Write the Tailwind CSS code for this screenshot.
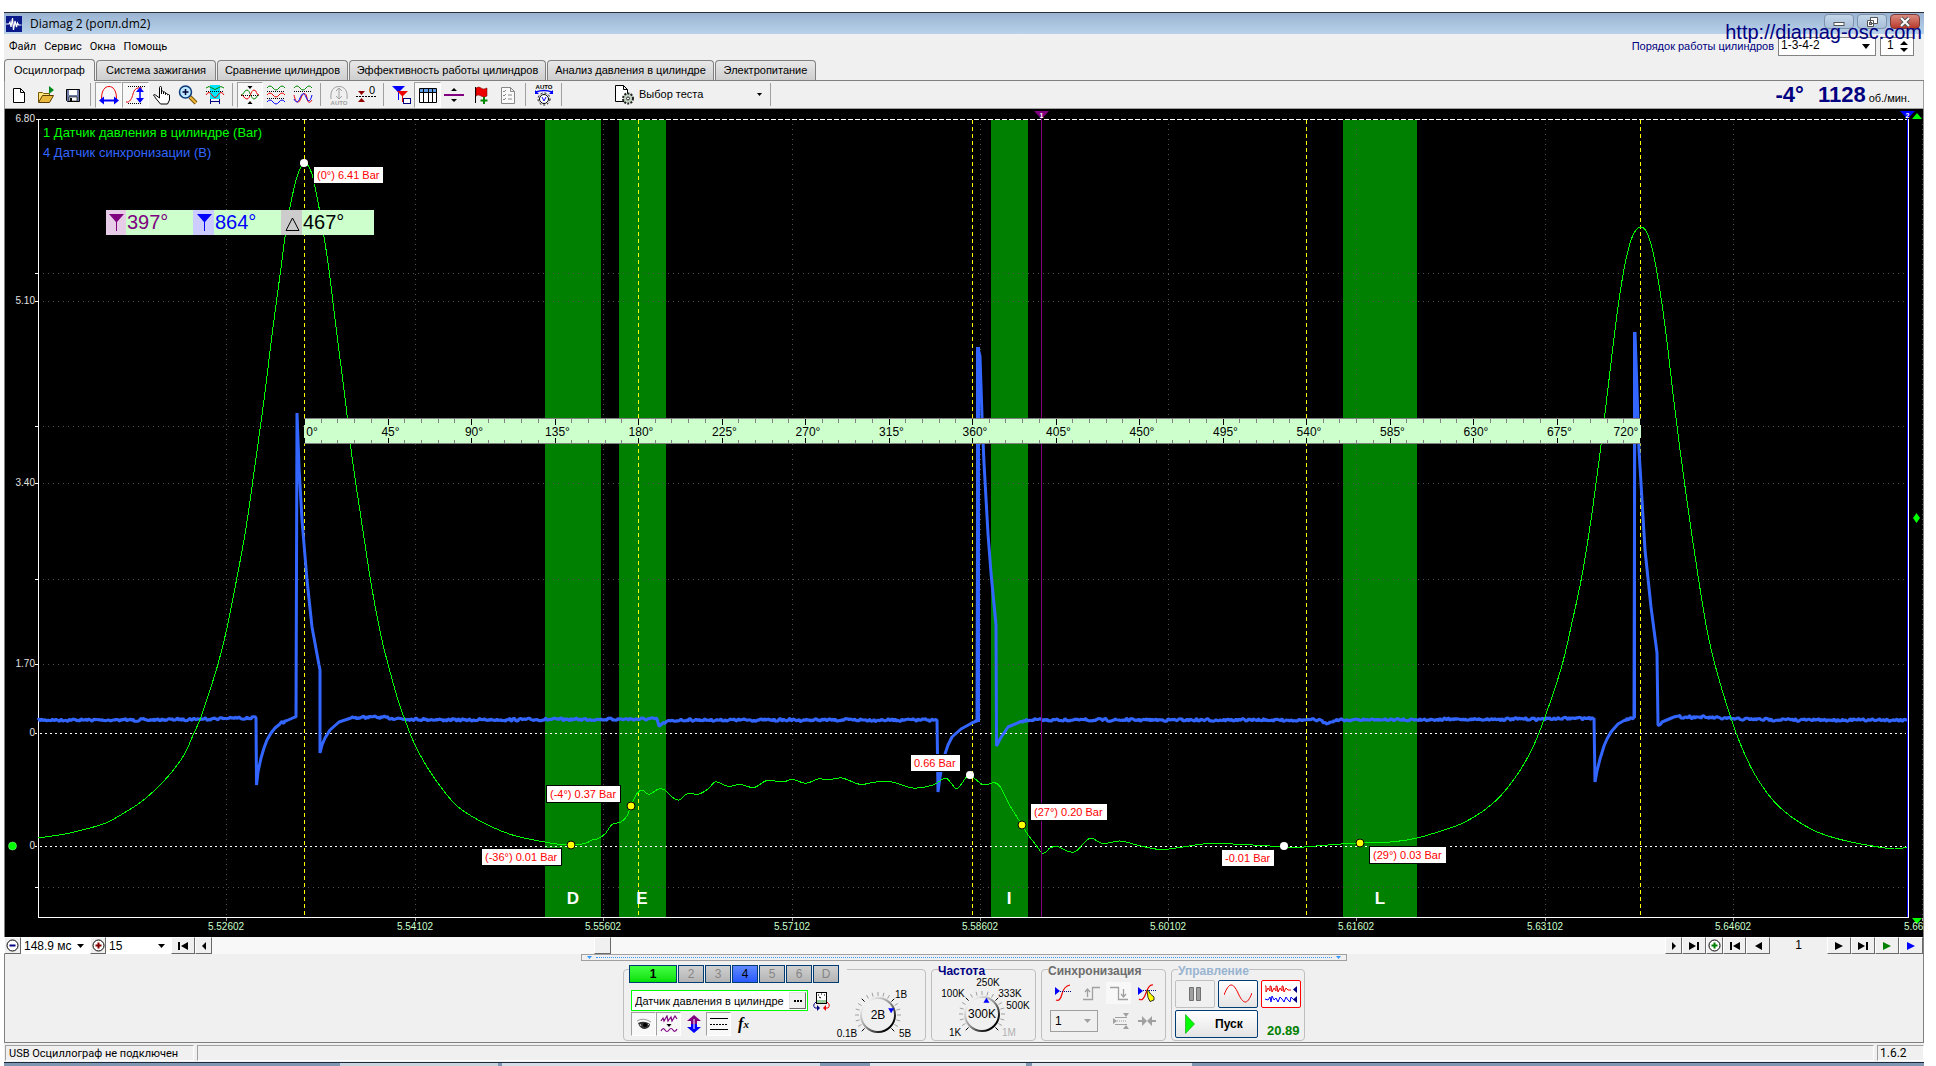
<!DOCTYPE html>
<html lang="ru">
<head>
<meta charset="utf-8">
<title>Diamag 2 (ропл.dm2)</title>
<script src="https://cdn.jsdelivr.net/npm/@tailwindcss/browser@4"></script>
</head>
<body class="h-screen overflow-hidden bg-white font-['Liberation_Sans',sans-serif] text-[11px] leading-none text-black">
<div class="flex h-full flex-col pt-3">
<div class="mr-3 ml-1 flex min-h-0 flex-1 flex-col bg-[#f0f0f0]">

  <!-- Title bar -->
  <header class="relative flex h-[22px] shrink-0 items-center border-t border-[#2b3038] bg-linear-to-b from-[#9ab4d2] to-[#b9d1ea] pt-px pl-[2px]">
    <svg class="h-4 w-4" viewBox="0 0 16 16"><rect width="16" height="16" fill="#0a1a8a"/><path d="M0 8h3l1-2 1 5 1.500-9 1 12 1.500-9 1.500 6 1-4 1 2h3" fill="none" stroke="#fff" stroke-width="1.200"/></svg>
    <span class="ml-2 font-['Open_Sans',sans-serif] text-[12px]">Diamag 2 (ропл.dm2)</span>
    <div class="ml-auto flex h-full items-start gap-[3px] pr-1">
      <button class="flex h-[15px] w-[30px] items-center justify-center rounded-sm border border-[#7f93ab] bg-linear-to-b from-[#c3d5e8] to-[#a9c0d9]" aria-label="Свернуть"><svg class="h-3 w-3" viewBox="0 0 12 12"><rect x="1" y="6.500" width="10" height="3" fill="#fff" stroke="#555"/></svg></button>
      <button class="flex h-[15px] w-[30px] items-center justify-center rounded-sm border border-[#7f93ab] bg-linear-to-b from-[#c3d5e8] to-[#a9c0d9]" aria-label="Развернуть"><svg class="h-3 w-3" viewBox="0 0 12 12"><path d="M4.500 1.500h7v6h-7zM1.500 4.500h6v6h-6z" fill="#fff" stroke="#555"/><rect x="3.500" y="6.500" width="2" height="2" fill="#aaa" stroke="#555"/></svg></button>
      <button class="flex h-[15px] w-[30px] items-center justify-center rounded-sm border border-[#7a3a35] bg-linear-to-b from-[#d98a80] to-[#b8382a]" aria-label="Закрыть"><svg class="h-3 w-3" viewBox="0 0 12 12"><path d="M2 2l8 8M10 2l-8 8" stroke="#555" stroke-width="4"/><path d="M2 2l8 8M10 2l-8 8" stroke="#fff" stroke-width="2"/></svg></button>
    </div>
    <a href="#" class="absolute top-[6px] right-[2px] z-10 text-[20px] leading-[26px] text-[#000080]">http://diamag-osc.com</a>
  </header>

  <!-- Menu and cylinder order -->
  <div class="flex h-6 shrink-0 items-start">
    <nav class="flex gap-2 pt-[7px] pl-[5px] font-['Roboto',sans-serif]">
      <a href="#">Файл</a><a href="#">Сервис</a><a href="#">Окна</a><a href="#">Помощь</a>
    </nav>
    <div class="ml-auto flex items-center pt-[3px] pr-[10px]">
      <label for="order" class="mr-1 text-[#000080]">Порядок работы цилиндров</label>
      <div class="relative mr-1">
        <select id="order" class="block h-[19px] w-[98px] appearance-none border border-[#828282] bg-white pb-1 pl-[2px] text-[12px]"><option>1-3-4-2</option></select>
        <svg class="pointer-events-none absolute top-[7px] right-[6px] h-[5px] w-2" viewBox="0 0 8 5"><path d="M0 0h8L4 5z"/></svg>
      </div>
      <div class="relative">
        <input aria-label="Цилиндр" value="1" class="block h-[19px] w-[34px] border border-[#828282] bg-white pb-1 pl-[6px] text-[12px]">
        <svg class="absolute top-1 right-[6px] h-[11px] w-2" viewBox="0 0 8 11"><path d="M0 4h8L4 0zM0 7h8L4 11z"/></svg>
      </div>
    </div>
  </div>

  <!-- Tabs -->
  <div class="flex h-[23px] shrink-0 items-end gap-px border-b border-[#808080]" role="tablist">
    <button role="tab" class="-mb-px h-[22px] w-[91px] rounded-t border border-b-0 border-[#808080] bg-[#f0f0f0]">Осциллограф</button>
    <button role="tab" class="h-[20px] w-[120px] rounded-t border border-b-0 border-[#808080] bg-linear-to-b from-[#e8e8e8] to-[#cecece]">Система зажигания</button>
    <button role="tab" class="h-[20px] w-[131px] rounded-t border border-b-0 border-[#808080] bg-linear-to-b from-[#e8e8e8] to-[#cecece]">Сравнение цилиндров</button>
    <button role="tab" class="h-[20px] w-[197px] rounded-t border border-b-0 border-[#808080] bg-linear-to-b from-[#e8e8e8] to-[#cecece]">Эффективность работы цилиндров</button>
    <button role="tab" class="h-[20px] w-[167px] rounded-t border border-b-0 border-[#808080] bg-linear-to-b from-[#e8e8e8] to-[#cecece]">Анализ давления в цилиндре</button>
    <button role="tab" class="h-[20px] w-[101px] rounded-t border border-b-0 border-[#808080] bg-linear-to-b from-[#e8e8e8] to-[#cecece]">Электропитание</button>
  </div>

  <!-- Toolbar -->
  <div class="flex h-7 shrink-0 items-center border-x border-b border-[#a0a0a0]">
    <button class="flex h-6 w-[27px] items-center justify-center" aria-label="Новый"><svg class="h-5 w-5" viewBox="0 0 20 20"><path d="M4.500 3.500h7l4 4v10h-11zM11.500 3.500v4h4" fill="#fff" stroke="#000"/></svg></button>
    <button class="flex h-6 w-[27px] items-center justify-center" aria-label="Открыть"><svg class="h-5 w-5" viewBox="0 0 20 20"><path d="M2.500 17V7.500h4l1 1h6V11" fill="#ffe680" stroke="#7a5a00"/><path d="M2.500 17.500l4-7h11l-4 7z" fill="#e8b93c" stroke="#5a3c00"/><path d="M13 1v8l5-4z" fill="#008a1c"/></svg></button>
    <button class="flex h-6 w-[27px] items-center justify-center" aria-label="Сохранить"><svg class="h-5 w-5" viewBox="0 0 20 20"><path d="M3.500 4.500h13v12h-12l-1-1z" fill="#707ca8" stroke="#000"/><path d="M6 5h8v5H6z" fill="#fff"/><path d="M6 12h8v4H6z" fill="#fff" stroke="#000" stroke-width=".6"/><path d="M7 13h2v3H7z"/></svg></button>
    <i class="mx-1 h-[23px] w-px bg-[#a0a0a0]"></i>
    <button class="flex h-[26px] w-[27px] items-center justify-center border border-r-white border-b-white border-l-[#a0a0a0] border-t-[#a0a0a0] bg-[#f8f8f8]" aria-label="Автоширина"><svg class="h-5 w-5" viewBox="0 0 20 20"><path d="M2.500 14C2.500 5 6 1.500 10 1.500S17.500 5 17.500 14" fill="none" stroke="#e00"/><path d="M3 15.500h14" stroke="#00f" stroke-width="2"/><path d="M0 15.500l5-4v8zM20 15.500l-5-4v8z" fill="#00f"/></svg></button>
    <button class="flex h-[26px] w-[27px] items-center justify-center border border-r-white border-b-white border-l-[#a0a0a0] border-t-[#a0a0a0] bg-[#f8f8f8]" aria-label="Автовысота"><svg class="h-5 w-5" viewBox="0 0 20 20"><path d="M2 1.500h17M2 18.500h13" stroke="#000" stroke-dasharray="1 1"/><path d="M0 17c4 1 6-4 7-8s3-7 9-6" fill="none" stroke="#e00"/><path d="M14 5v11" stroke="#00f" stroke-width="1.500"/><path d="M14 2l4 5h-8zM14 18l4-5h-8z" fill="#00f"/></svg></button>
    <button class="flex h-6 w-[26px] items-center justify-center" aria-label="Рука"><svg class="h-5 w-5" viewBox="0 0 20 20"><path d="M7.500 12V2.500q0-1 1-1t1 1V9V6.500q1-1 2 0V9V7.500q1-1 2 0v2q0-1 1-1t1 1V10q1-1 2 0v5l-2 4H8.500l-5-6q-1-2-2-3 1-1 2 0l4 3z" fill="#fff" stroke="#000"/></svg></button>
    <button class="flex h-6 w-[26px] items-center justify-center" aria-label="Масштаб"><svg class="h-5 w-5" viewBox="0 0 20 20"><path d="M12 12l6 6" stroke="#7a5200" stroke-width="4"/><path d="M12 12l6 6" stroke="#f1b93c" stroke-width="2"/><circle cx="7.500" cy="7" r="6" fill="#bfe6ff" stroke="#0b3a7a" stroke-width="1.500"/><path d="M7.500 4v6M4.500 7h6" stroke="#003" stroke-width="1.500"/></svg></button>
    <button class="flex h-6 w-[27px] items-center justify-center" aria-label="Диапазон"><svg class="h-5 w-5" viewBox="0 0 20 20"><path d="M5 0h10v14H5z" fill="#00e5ff"/><path d="M1 3q3-3 6 0t6 0 6 0" fill="none" stroke="#080"/><path d="M1 10q3-5 6 0t6 0 6 0" fill="none" stroke="#e00"/><path d="M1 6.500h18" stroke="#000" stroke-dasharray="1 1"/><path d="M5.500 14v5M14.500 14v5M6 16.500h8" stroke="#000080"/></svg></button>
    <i class="mx-1 h-[23px] w-px bg-[#a0a0a0]"></i>
    <button class="flex h-[26px] w-[26px] items-center justify-center border border-r-white border-b-white border-l-[#a0a0a0] border-t-[#a0a0a0] bg-[#f8f8f8]" aria-label="Совместить"><svg class="h-5 w-5" viewBox="0 0 20 20"><path d="M7.500 1h5L10 4zM7.500 19h5L10 16z"/><path d="M1 10c3 0 3-5 6-5s4 9 7 9 2-4 5-4" fill="none" stroke="#080"/><path d="M1 10c3 0 3 4 6 4s4-9 7-9 2 5 5 5" fill="none" stroke="#e00"/><path d="M1 10.500h18" stroke="#000" stroke-dasharray="1 1"/></svg></button>
    <button class="flex h-6 w-[26px] items-center justify-center" aria-label="Разнести"><svg class="h-5 w-5" viewBox="0 0 20 20" fill="none"><path d="M1 3q3-4 6 0t6 0 6 0" stroke="#080"/><path d="M1 10q3-4 6 0t6 0 6 0" stroke="#e00"/><path d="M1 17q3-4 6 0t6 0 6 0" stroke="#00f"/><path d="M1 6.500h18M1 13.500h18" stroke="#000" stroke-dasharray="1 1"/></svg></button>
    <button class="flex h-6 w-[27px] items-center justify-center" aria-label="Наложить"><svg class="h-5 w-5" viewBox="0 0 20 20" fill="none"><path d="M1 3q3-4 6 0t6 0 6 0" stroke="#080"/><path d="M1 6.500h18" stroke="#000" stroke-dasharray="1 1"/><path d="M1 10c2 9 5 9 7 3s5-6 6 0 3 5 5 2" stroke="#e00"/><path d="M1 14c2 4 4 4 6-1s4-6 6-1 4 6 6-2" stroke="#00f"/></svg></button>
    <i class="mx-1 h-[23px] w-px bg-[#a0a0a0]"></i>
    <button class="flex h-6 w-[27px] items-center justify-center" aria-label="Авто"><svg class="h-5 w-5" viewBox="0 0 20 20"><path d="M2 14C1 5 5 1.500 10 1.500S19 5 18 14" fill="none" stroke="#a0a0a0"/><path d="M10 4v9M7 6l3-3 3 3M7 11l3 3 3-3" fill="none" stroke="#a0a0a0"/><text x="10" y="20" text-anchor="middle" font-size="6" font-weight="bold" fill="#a0a0a0">AUTO</text></svg></button>
    <button class="flex h-6 w-[27px] items-center justify-center" aria-label="Ноль"><svg class="h-5 w-5" viewBox="0 0 20 20"><path d="M2 6h7l-3.500 4zM2 17h7l-3.500-4z" fill="#900000"/><path d="M0 11.500h20" stroke="#000" stroke-dasharray="2 1"/><text x="13" y="9" font-size="11">0</text></svg></button>
    <i class="mx-1 h-[23px] w-px bg-[#a0a0a0]"></i>
    <button class="flex h-6 w-[26px] items-center justify-center" aria-label="Маркеры"><svg class="h-5 w-5" viewBox="0 0 20 20"><path d="M1 1h13L8 7v8H7V7z" fill="#00f"/><path d="M6 6h11l-5 5v6h-1v-6z" fill="#e00"/><rect x="12.500" y="13.500" width="7" height="5" fill="#fff" stroke="#000080"/></svg></button>
    <button class="flex h-[26px] w-[27px] items-center justify-center border border-r-white border-b-white border-l-[#a0a0a0] border-t-[#a0a0a0] bg-[#f8f8f8]" aria-label="Таблица"><svg class="h-5 w-5" viewBox="0 0 20 20"><path d="M1.500 3.500h17v14h-17z" fill="#fff" stroke="#000"/><path d="M2 4h16v3H2z" fill="#5a9be6"/><path d="M1 7.500h18M5.500 4v13M10.500 4v13M14.500 4v13" stroke="#000" shape-rendering="crispEdges"/></svg></button>
    <button class="flex h-6 w-[26px] items-center justify-center" aria-label="Линия"><svg class="h-5 w-5" viewBox="0 0 20 20"><path d="M0 10h20" stroke="#800080" stroke-width="2"/><path d="M7 6h6l-3-3zM7 14h6l-3 3z"/></svg></button>
    <button class="flex h-6 w-[28px] items-center justify-center" aria-label="Флаг"><svg class="h-5 w-5" viewBox="0 0 20 20"><path d="M4.500 2v16" stroke="#000"/><path d="M5 3q3-2 5 0t6 0v8q-3 2-6 0t-5 0z" fill="#e00" stroke="#600" stroke-width=".5"/><path d="M13 12v7M9.500 15.500h7" stroke="#080" stroke-width="2"/></svg></button>
    <button class="flex h-6 w-[26px] items-center justify-center" aria-label="Список"><svg class="h-5 w-5" viewBox="0 0 20 20"><path d="M3.500 2.500h9l4 4v12h-13zM12.500 2.500v4h4" fill="#fafafa" stroke="#888"/><path d="M5 6l1 1 2-2M5 10l1 1 2-2M5 14l1 1 2-2M10 10h4M10 14h4" fill="none" stroke="#888"/></svg></button>
    <i class="mx-1 h-[23px] w-px bg-[#a0a0a0]"></i>
    <button class="flex h-6 w-[27px] items-center justify-center" aria-label="Авто напряжение"><svg class="h-[22px] w-5" viewBox="0 0 20 22"><text x="10" y="5" text-anchor="middle" font-size="6" font-weight="bold">AUTO</text><path d="M2 8q8-3 16 0" fill="none" stroke="#00f" stroke-width="1.500"/><path d="M1 6v4h4zM19 6v4h-4z" fill="#00f"/><circle cx="10" cy="15" r="6" fill="none" stroke="#000" stroke-dasharray="2 2"/><circle cx="10" cy="15" r="4.500" fill="#fff" stroke="#000"/><path d="M8 13l2 4 2-4" fill="none" stroke="#00f"/></svg></button>
    <i class="mx-1 h-[23px] w-px bg-[#a0a0a0]"></i>
    <button class="ml-[47px] flex h-6 w-[149px] items-center">
      <svg class="h-5 w-[22px]" viewBox="0 0 22 20"><path d="M2.500 .5h8l4 4v12h-12zM10.500.5v4h4" fill="#fff" stroke="#000"/><circle cx="15" cy="13.500" r="5" fill="#c4d4c4" stroke="#222" stroke-width="2" stroke-dasharray="2 1.200"/><circle cx="15" cy="13.500" r="1.500" fill="#fff" stroke="#222"/></svg>
      <span class="ml-1">Выбор теста</span>
      <svg class="ml-auto h-[3px] w-[5px]" viewBox="0 0 5 3"><path d="M0 0h5L2.500 3z"/></svg>
    </button>
    <i class="ml-2 h-[23px] w-px bg-[#a0a0a0]"></i>
    <div class="ml-auto flex items-baseline pr-[13px] text-[22px] font-bold text-[#000080]">
      <span class="mr-[14px]">-4°</span><span>1128</span><span class="ml-[3px] text-[11px] font-normal text-black">об./мин.</span>
    </div>
  </div>

  <!-- Oscillogram -->
  <main id="chart" class="relative min-h-0 flex-1 overflow-hidden border-x border-[#808080] bg-black">
    <svg id="plot" class="absolute inset-0 h-full w-full" viewBox="5 109 1918 828" preserveAspectRatio="none"></svg>
    <div class="absolute top-[17px] left-[38px] flex flex-col gap-[7px] text-[13px]">
      <span class="text-[#00ff00]">1 Датчик давления в цилиндре (Bar)</span>
      <span class="text-[#3366ff]">4 Датчик синхронизации (В)</span>
    </div>
    <div class="absolute top-[101px] left-[101px] z-10 flex h-[25px] items-stretch bg-[#ccffcc] text-[20px] leading-[25px]">
      <svg class="w-5 bg-[#e6cce6]" viewBox="0 0 20 25"><path d="M3 4h15l-7 8v9h-1v-9z" fill="#800080"/></svg><span class="w-[67px] pl-px text-[#800080]">397°</span>
      <svg class="w-[21px] bg-[#ccccff]" viewBox="0 0 21 25"><path d="M4 4h15l-7 8v9h-1v-9z" fill="#00f"/></svg><span class="w-[67px] pl-px text-[#0000ff]">864°</span>
      <svg class="w-[21px] bg-[#cccccc]" viewBox="0 0 21 25"><path d="M5 20.500h13L11.500 8z" fill="none" stroke="#000"/></svg><span class="w-[72px] pl-px">467°</span>
    </div>
  </main>

  <!-- Time scale and navigation -->
  <div class="flex h-[17px] shrink-0 items-stretch border-r border-[#808080]">
    <button class="flex w-[17px] items-center justify-center border border-white border-r-[#696969] border-b-[#696969]" aria-label="Уменьшить"><svg class="h-[13px] w-[13px] shrink-0" viewBox="0 0 13 13"><circle cx="6.500" cy="6.500" r="5.500" fill="#fff" stroke="#000"/><path d="M3.500 6.500h6" stroke="#000080" stroke-width="2"/></svg></button>
    <div class="relative"><select aria-label="Развёртка" class="block h-full w-[69px] appearance-none bg-white pl-[3px] text-[12px]"><option>148.9 мс</option></select><svg class="pointer-events-none absolute top-[7px] right-[6px] h-1 w-[7px]" viewBox="0 0 7 4"><path d="M0 0h7L3.500 4z"/></svg></div>
    <button class="flex w-4 items-center justify-center border border-white border-r-[#696969] border-b-[#696969]" aria-label="Увеличить"><svg class="h-[13px] w-[13px] shrink-0" viewBox="0 0 13 13"><circle cx="6.500" cy="6.500" r="5.500" fill="#fff" stroke="#000"/><path d="M3.500 6.500h6M6.500 3.500v6" stroke="#800000" stroke-width="2"/></svg></button>
    <div class="relative"><select aria-label="Деление" class="block h-full w-[65px] appearance-none bg-white pl-[3px] text-[12px]"><option>15</option></select><svg class="pointer-events-none absolute top-[7px] right-[6px] h-1 w-[7px]" viewBox="0 0 7 4"><path d="M0 0h7L3.500 4z"/></svg></div>
    <button class="flex w-6 items-center justify-center border border-white border-r-[#696969] border-b-[#696969]" aria-label="В начало"><svg class="h-2 w-[10px]" viewBox="0 0 10 8"><path d="M0 0h2v8H0zM10 0v8L3 4z"/></svg></button>
    <button class="flex w-[17px] items-center justify-center border border-white border-r-[#696969] border-b-[#696969]" aria-label="Влево"><svg class="h-2 w-1" viewBox="0 0 4 8"><path d="M4 0v8L0 4z"/></svg></button>
    <div class="relative flex-1 bg-[#f8f8f8]"><div class="absolute inset-y-0 left-[26.3%] w-[17px] border border-white border-r-[#696969] border-b-[#696969] bg-[#f0f0f0]"></div></div>
    <button class="flex w-[17px] items-center justify-center border border-white border-r-[#696969] border-b-[#696969]" aria-label="Вправо"><svg class="h-2 w-1" viewBox="0 0 4 8"><path d="M0 0v8l4-4z"/></svg></button>
    <button class="flex w-6 items-center justify-center border border-white border-r-[#696969] border-b-[#696969]" aria-label="В конец"><svg class="h-2 w-[10px]" viewBox="0 0 10 8"><path d="M8 0h2v8H8zM0 0v8l7-4z"/></svg></button>
    <button class="flex w-[17px] items-center justify-center border border-white border-r-[#696969] border-b-[#696969]" aria-label="Добавить"><svg class="h-[13px] w-[13px] shrink-0" viewBox="0 0 13 13"><circle cx="6.500" cy="6.500" r="5.500" fill="#fff" stroke="#000"/><path d="M3.500 6.500h6M6.500 3.500v6" stroke="#008000" stroke-width="2"/></svg></button>
    <button class="flex w-[23px] items-center justify-center border border-white border-r-[#696969] border-b-[#696969]" aria-label="Первый кадр"><svg class="h-2 w-[10px]" viewBox="0 0 10 8"><path d="M0 0h2v8H0zM10 0v8L3 4z"/></svg></button>
    <button class="flex w-6 items-center justify-center border border-white border-r-[#696969] border-b-[#696969]" aria-label="Предыдущий кадр"><svg class="h-2 w-[7px]" viewBox="0 0 7 8"><path d="M7 0v8L0 4z"/></svg></button>
    <span class="w-[57px] text-center text-[12px] leading-[17px]">1</span>
    <button class="flex w-6 items-center justify-center border border-white border-r-[#696969] border-b-[#696969]" aria-label="Следующий кадр"><svg class="h-2 w-2" viewBox="0 0 8 8"><path d="M0 0v8l8-4z"/></svg></button>
    <button class="flex w-6 items-center justify-center border border-white border-r-[#696969] border-b-[#696969]" aria-label="Последний кадр"><svg class="h-2 w-[10px]" viewBox="0 0 10 8"><path d="M8 0h2v8H8zM0 0v8l7-4z"/></svg></button>
    <button class="flex w-6 items-center justify-center border border-white border-r-[#696969] border-b-[#696969]" aria-label="Воспроизвести"><svg class="h-2 w-2" viewBox="0 0 8 8"><path d="M0 0v8l8-4z" fill="#008000"/></svg></button>
    <button class="flex w-6 items-center justify-center border border-white border-r-[#696969] border-b-[#696969]" aria-label="Быстро"><svg class="h-2 w-2" viewBox="0 0 8 8"><path d="M0 0v8l8-4z" fill="#00f"/></svg></button>
  </div>

  <!-- Channel, rate, trigger and run controls -->
  <section class="flex h-[89px] shrink-0 flex-col border-x border-b border-[#808080]">
    <div class="mx-auto flex h-[7px] w-[766px] shrink-0 items-center justify-between border border-[#a0a0a0] px-[5px]">
      <svg class="h-[3px] w-[5px]" viewBox="0 0 5 3"><path d="M0 0h5L2.500 3z" fill="#3399ff"/></svg>
      <div class="mx-1 h-0 flex-1 border-t border-dotted border-[#3399ff]"></div>
      <svg class="h-[3px] w-[5px]" viewBox="0 0 5 3"><path d="M0 0h5L2.500 3z" fill="#3399ff"/></svg>
    </div>
    <div class="flex justify-center gap-[5px] pt-2">
      <fieldset class="relative h-[72px] w-[303px] rounded border border-[#bfbfbf]">
        <div class="absolute -top-[5px] left-[5px] flex gap-px bg-[#f0f0f0] pr-2 text-[12px]">
          <button class="h-[18px] w-[48px] border border-[#003c74] bg-linear-to-b from-[#40ff40] to-[#00e000] font-bold">1</button>
          <button class="h-[18px] w-[26px] border border-[#003c74] bg-linear-to-b from-[#d0d0d0] to-[#b4b4b4] text-[#858585]">2</button>
          <button class="h-[18px] w-[26px] border border-[#003c74] bg-linear-to-b from-[#d0d0d0] to-[#b4b4b4] text-[#858585]">3</button>
          <button class="h-[18px] w-[26px] border border-[#003c74] bg-linear-to-b from-[#6088ff] to-[#2a58ff]">4</button>
          <button class="h-[18px] w-[26px] border border-[#003c74] bg-linear-to-b from-[#d0d0d0] to-[#b4b4b4] text-[#858585]">5</button>
          <button class="h-[18px] w-[26px] border border-[#003c74] bg-linear-to-b from-[#d0d0d0] to-[#b4b4b4] text-[#858585]">6</button>
          <button class="h-[18px] w-[26px] border border-[#003c74] bg-linear-to-b from-[#d0d0d0] to-[#b4b4b4] text-[#858585]">D</button>
        </div>
        <div class="flex pt-5 pl-[7px]">
          <div class="flex w-[200px] flex-col gap-px">
            <div class="flex items-center gap-1">
              <div class="flex h-[21px] w-[177px] items-center border border-[#00ff00] bg-white pr-px">
                <input aria-label="Датчик" value="Датчик давления в цилиндре" class="h-full min-w-0 flex-1 bg-white pl-[3px] text-[11px]">
                <button class="flex h-[17px] w-[17px] items-center justify-center border border-[#e3e3e3] border-r-[#696969] border-b-[#696969] bg-[#f0f0f0]" aria-label="Выбрать датчик"><svg class="h-[2px] w-2" viewBox="0 0 8 2"><path d="M0 0h2v2H0zM3 0h2v2H3zM6 0h2v2H6z"/></svg></button>
              </div>
              <svg class="h-5 w-[19px] shrink-0" viewBox="0 0 19 20"><rect x="4.500" y="1.500" width="10" height="11" fill="#fff" stroke="#000"/><path d="M5 9h9v3H5z" fill="#9c9"/><path d="M6 4h1M9 3h1M12 4h1M7 6l2 1" stroke="#000"/><path d="M4 11q-4 3-1 6h3" fill="none" stroke="#000080"/><path d="M5 14v6l3-3z" fill="#000080"/><path d="M15 11q4 3 1 6h-3" fill="none" stroke="#e00"/><path d="M14 14v6l-3-3z" fill="#e00"/></svg>
            </div>
            <div class="flex">
              <button class="flex h-6 w-[25px] items-center justify-center border border-t-[#a0a0a0] border-l-[#a0a0a0] border-r-white border-b-white bg-[#f8f8f8]" aria-label="Показать"><svg class="h-3 w-4" viewBox="0 0 16 12"><path d="M1 3q6-4 14 1" fill="none" stroke="#999"/><path d="M2 5q6-3 12 1 0 4-5 5-5 0-7-6z" fill="#333"/><circle cx="9" cy="7" r="2" fill="#000"/><path d="M4 6l1 2M12 6l1 1" stroke="#ccc"/></svg></button>
              <button class="flex h-6 w-[25px] items-center justify-center border border-t-[#a0a0a0] border-l-[#a0a0a0] border-r-white border-b-white bg-[#f8f8f8]" aria-label="Фильтр"><svg class="h-[18px] w-[18px]" viewBox="0 0 18 18"><path d="M1 6l2-3 1 3 3-5 1 5 3-4 1 4 3-5 2 3M1 16q2-4 4-1t4 0 4 0 4-1" fill="none" stroke="#800080" stroke-width="1.200"/><path d="M6.500 9h5L9 12z"/></svg></button>
              <button class="flex h-6 w-[25px] items-center justify-center" aria-label="Сдвиг"><svg class="h-[18px] w-4" viewBox="0 0 16 18"><path d="M8 0l7 6h-4v3H5V6H1z" fill="#800080"/><path d="M8 18l7-6h-4V9H5v3H1z" fill="#00f"/><path d="M8 4v10" stroke="#fff"/></svg></button>
              <button class="flex h-6 w-[25px] items-center justify-center border border-t-[#a0a0a0] border-l-[#a0a0a0] border-r-white border-b-white bg-[#f8f8f8]" aria-label="Линии"><svg class="h-[14px] w-[18px]" viewBox="0 0 18 14"><path d="M0 1.500h18M0 12.500h18" stroke="#000"/><path d="M0 7.500h18" stroke="#000" stroke-dasharray="2 1"/></svg></button>
              <button class="flex h-6 w-[25px] items-center justify-center font-['Liberation_Serif',serif] text-[16px] font-bold italic">f<span class="text-[11px]">x</span></button>
            </div>
          </div>
          <svg id="gain" class="-mt-1 h-14 w-[92px]" viewBox="831 985 92 56"></svg>
        </div>
      </fieldset>
      <fieldset class="relative h-[72px] w-[105px] rounded border border-[#bfbfbf]">
        <legend class="absolute -top-[5px] left-[6px] bg-[#f0f0f0] text-[12px] font-bold text-[#000080]">Частота</legend>
        <svg id="rate" class="mt-[5px] h-[65px] w-full" viewBox="932 975 103 65"></svg>
      </fieldset>
      <fieldset class="relative h-[72px] w-[125px] rounded border border-[#bfbfbf]">
        <legend class="absolute -top-[5px] left-[6px] bg-[#f0f0f0] text-[12px] font-bold text-[#6d6d6d]">Синхронизация</legend>
        <div class="flex flex-col gap-[6px] pt-3 pl-2">
          <div class="flex items-center gap-[3px]">
            <button class="flex h-[22px] w-[25px] items-center justify-center" aria-label="Уровень"><svg class="h-[18px] w-[18px]" viewBox="0 0 18 18"><path d="M2 16q4 2 6-6t8-9" fill="none" stroke="#e00" stroke-width="1.200"/><path d="M1 3v8l5-4z" fill="#00f"/><path d="M6 7.500h12" stroke="#000080" stroke-dasharray="1 1"/></svg></button>
            <button class="flex h-[22px] w-[25px] items-center justify-center" aria-label="Фронт"><svg class="h-[18px] w-[18px]" viewBox="0 0 18 18"><path d="M1 15.500h9.500v-12H18M5.500 13V6M3 8l2.500-3L8 8" fill="none" stroke="#a0a0a0" stroke-width="1.300"/></svg></button>
            <button class="flex h-[22px] w-[25px] items-center justify-center bg-[#f8f8f8]" aria-label="Спад"><svg class="h-[18px] w-[18px]" viewBox="0 0 18 18"><path d="M0 3.500h8.500v12H18M13.500 5v8M11 10l2.500 3 2.500-3" fill="none" stroke="#a0a0a0" stroke-width="1.300"/></svg></button>
            <button class="flex h-[22px] w-[25px] items-center justify-center" aria-label="Авто уровень"><svg class="h-[18px] w-[18px]" viewBox="0 0 18 18"><path d="M1 15q4 3 7-6t7-8" fill="none" stroke="#e00" stroke-width="1.200"/><path d="M0 3v8l5-4z" fill="#00f"/><path d="M5 6.500h13" stroke="#000080" stroke-dasharray="1 1"/><path d="M9 6.500l1-.5 2.500 4 3.500 3v3l-4 1.500-2-4z" fill="#ff0" stroke="#000" stroke-width=".8"/></svg></button>
          </div>
          <div class="flex items-center">
            <div class="relative mr-[12px]"><select aria-label="Канал синхронизации" class="block h-[22px] w-[48px] appearance-none border border-[#a0a0a0] bg-[#f0f0f0] pl-1 text-[12px]"><option>1</option></select><svg class="pointer-events-none absolute top-[9px] right-[7px] h-1 w-[7px]" viewBox="0 0 7 4"><path d="M0 0h7L3.500 4z" fill="#a0a0a0"/></svg></div>
            <button class="flex h-5 w-[21px] items-center justify-center" aria-label="Задержка"><svg class="h-4 w-[18px]" viewBox="0 0 18 16"><path d="M11 0h6l-3 4zM11 16h6l-3-4zM1 5v6l4-3z" fill="#a0a0a0"/><path d="M3 4.500h12M3 11.500h12" stroke="#a0a0a0"/><path d="M5 8h10" stroke="#a0a0a0" stroke-dasharray="1 1"/></svg></button>
            <button class="ml-[5px] flex h-5 w-[21px] items-center justify-center" aria-label="Центр"><svg class="h-[10px] w-[18px]" viewBox="0 0 18 10"><path d="M0 4h4V0l5 5-5 5V6H0zM18 4h-4V0L9 5l5 5V6h4z" fill="#a0a0a0"/></svg></button>
          </div>
        </div>
      </fieldset>
      <fieldset class="relative h-[72px] w-[134px] rounded border border-[#bfbfbf]">
        <legend class="absolute -top-[5px] left-[6px] bg-[#f0f0f0] text-[12px] font-bold text-[#99b4d1]">Управление</legend>
        <div class="flex flex-col gap-[2px] pt-[10px] pl-[3px]">
          <div class="flex gap-[3px]">
            <button class="flex h-7 w-10 items-center justify-center rounded-xs border border-[#c0c0c0] bg-[#f0f0f0]" aria-label="Пауза"><svg class="h-[14px] w-3" viewBox="0 0 12 14"><path d="M.5.5h4v13h-4zM7.500.5h4v13h-4z" fill="#a0a0a0" stroke="#707070"/></svg></button>
            <button class="flex h-7 w-10 items-center justify-center rounded-xs border border-[#003c74] bg-linear-to-b from-white to-[#e4e4e4]" aria-label="Осциллограмма"><svg class="h-5 w-7" viewBox="0 0 28 20"><path d="M0 11C5-2 9-2 14 9s9 13 14 0" fill="none" stroke="#e00"/></svg></button>
            <button class="flex h-7 w-10 items-center justify-center rounded-xs border border-[#ff0000] bg-white" aria-label="Непрерывно"><svg class="h-[18px] w-8" viewBox="0 0 32 18" fill="none"><path d="M0 1h1v6l2-4 2 3V1h1l1 6 2-4 2 3V1h1l1 6 2-4 2 3V1h1l1 6 2-4 2 2h3" stroke="#e00"/><path d="M0 14l3 1 2-3 1 5 1-6 2 4 2-2 2 4 2-5 2 2 2 3 2-5 2 3 2 2 1-5 3 3" stroke="#00f"/><path d="M32 1v7l-4-3.500zM32 11v7l-4-3.500z" fill="#000080"/></svg></button>
          </div>
          <div class="flex items-end gap-[9px]">
            <button class="flex h-7 w-[83px] items-center rounded-xs border border-[#003c74] bg-linear-to-b from-white to-[#e4e4e4] pl-[9px] text-[12px] font-bold"><svg class="mr-5 h-5 w-[10px]" viewBox="0 0 10 20"><path d="M.5.5v19l9-9.500z" fill="#0f0" stroke="#080" stroke-width=".5"/></svg>Пуск</button>
            <span class="pb-[1px] text-[13px] font-bold text-[#008000]">20.89</span>
          </div>
        </div>
      </fieldset>
    </div>
  </section>

  <!-- Status bar -->
  <footer class="flex h-[19px] shrink-0 items-stretch gap-[3px] pt-[2px] pb-px pl-px font-['Roboto',sans-serif]">
    <div class="flex w-[189px] items-center border border-t-[#a0a0a0] border-l-[#a0a0a0] border-r-white border-b-white pl-[3px] whitespace-nowrap">USB Осциллограф не подключен</div>
    <div class="flex-1 border border-t-[#a0a0a0] border-l-[#a0a0a0] border-r-white border-b-white"></div>
    <div class="flex w-[47px] items-center border border-t-[#a0a0a0] border-l-[#a0a0a0] border-r-white border-b-white pl-[2px] text-[12px]">1.6.2</div>
  </footer>
  <div class="flex h-1 shrink-0 border-t border-[#1c2a3a] bg-[#7f97b2]">
    <div class="ml-[336px] w-[158px] bg-[#c9d3de]"></div><div class="ml-1 w-[318px] bg-[#d5dde6]"></div><div class="ml-[50px] w-[156px] bg-[#dde4ea]"></div><div class="ml-[6px] w-[160px] bg-[#dde4ea]"></div>
  </div>
</div>
</div>

<script>
const V = {x: 5, y: 109, w: 1918, h: 828};
const plot = document.getElementById('plot'), chart = document.getElementById('chart');
let s = '';
const line = (x1, y1, x2, y2, c, d = '', w = 1) =>
  s += `<line x1="${x1}" y1="${y1}" x2="${x2}" y2="${y2}" stroke="${c}" stroke-width="${w}" stroke-dasharray="${d}" shape-rendering="crispEdges"/>`;

// Phase bands
[[545, 601], [619, 666], [991, 1028], [1343, 1417]].forEach(([a, b]) =>
  s += `<rect x="${a}" y="120" width="${b - a}" height="797" fill="#008000"/>`);

// Grid
const xs = [226, 415, 603, 792, 980, 1168, 1356, 1545, 1733, 1922];
xs.forEach(x => { line(x + .5, 124, x + .5, 917, '#505050', '1 4'); line(x + .5, 918, x + .5, 921, '#a0a0a0'); });
[273, 301, 426, 483, 579, 664, 887].forEach(y => { line(43, y + .5, 1906, y + .5, '#505050', '1 4'); line(35, y + .5, 39, y + .5, '#fff'); });
[733, 846].forEach(y => { line(35, y + .5, 1906, y + .5, '#fff', '2 3'); });
line(36, 119.5, 1907, 119.5, '#fff', '5 2');
line(38.5, 119, 38.5, 918, '#fff');
line(38, 917.5, 1909, 917.5, '#fff');
[304, 638, 972, 1306, 1640].forEach(x => line(x + .5, 120, x + .5, 917, '#ff0', '4 3'));

// Sync signal: corner points, with sampling noise on the flat parts
const sync = [[38,720],[150,720],[200,719],[240,718],[256,718],[256.5,785],[258,772],[261,758],[264,748],[267,740],[271,733],[275,728],[280,724],[286,721],[295,717],[296,717],[297,413],[299,467],[302,520],[307,580],[312,627],[319,665],[320,670],[320,753],[322,745],[325,738],[330,730],[339,722],[351,718],[371,717],[408,719],[450,720],[657,719],[659,726],[664,723],[670,721],[680,720],[937,720],[938,792],[940,777],[942,766],[945,754],[948,745],[952,737],[961,729],[972,723],[977,722],[978,348],[980,356],[982,416],[984,463],[988,534],[991,573],[996,625],[996.5,746],[1000,739],[1008,727],[1020,722],[1030,720],[1318,720],[1328,723],[1336,720],[1540,719],[1594,718],[1595,782],[1597,771],[1600,759],[1604,746],[1607,739],[1611,732],[1618,724],[1625,720],[1634,717],[1635,332],[1639,450],[1645,550],[1651,607],[1657,653],[1658,725],[1662,722],[1674,717],[1698,717],[1735,719],[1800,720],[1907,720]];
let seed = 7;
const rnd = () => (seed = (seed * 16807) % 2147483647) / 2147483647;
let d = `M${sync[0]}`;
for (let i = 1; i < sync.length; i++) {
  const [x0, y0] = sync[i - 1], [x1, y1] = sync[i];
  if (Math.abs(y1 - y0) < 4) for (let x = x0 + 1; x < x1; x++)
    d += `L${x} ${(y0 + (y1 - y0) * (x - x0) / (x1 - x0) + (rnd() - .5) * 3).toFixed(1)}`;
  d += `L${x1} ${y1}`;
}
s += `<path d="${d}" fill="none" stroke="#3366ff" stroke-width="3" stroke-linejoin="bevel"/>`;
line(978, 347, 978, 722, '#36f', '', 4); line(1634.5, 332, 1634.5, 718, '#36f', '', 3);

// Cylinder pressure, smoothed through its samples
const p = [[38,838],[65,834],[86,829],[106,823],[124,813],[141,802],[157,788],[171,773],[184,755],[194,733],[201,717],[210,690],[218,664],[226.5,630],[236.5,580],[246,528],[255,465],[264,400],[272,335],[280.7,270],[285,237],[289.7,209],[294.3,187],[299,171],[304,163],[308.500,166],[313,178],[319.3,209],[324,237],[329,270],[337,335],[345.3,400],[350.2,443],[356,485],[363.3,533],[371,583],[380.4,633],[388,664],[398,700],[408,728],[415.5,746],[429,770],[443,790],[457,806],[473,817],[492,827],[514,835.5],[539,841],[559,844.3],[571,845],[585,843.5],[592,840],[597,839],[605,834],[612,824.5],[621,822],[627,816],[631,806],[636,795],[642,790],[649,794.5],[658,789.3],[665,790],[672,797],[679,800],[687,794],[699,794],[708,789],[715,782],[722,784],[729,786.5],[740,784.5],[754,787.5],[767,780.5],[783,782],[792,779.3],[806,783.3],[818,779],[829,779.7],[842,778],[860,784.3],[876,782],[892,782],[913,788],[933,785],[945,778],[951,783],[957,789],[965,779],[970,775],[983,784.7],[995,782.7],[1001,788],[1009.6,805],[1022,825],[1027.5,834],[1036,845],[1043,853.5],[1050,848],[1057,846.4],[1067,851],[1075,851.8],[1083,844.3],[1091,838],[1103,843.6],[1120,841],[1137,845],[1160,849.5],[1183,847],[1200,844.3],[1213,843.5],[1233,844],[1253,845],[1270,846],[1284,846.5],[1294,847.7],[1308,846.7],[1341,844],[1360,843],[1390,842],[1416,838.3],[1444,830],[1463,823],[1481.7,812],[1500.5,796],[1519,772],[1533,747],[1545,717],[1561.5,667],[1571,627],[1581.7,577],[1591,520],[1600,453],[1606.6,400],[1613,346],[1619,300],[1625,264],[1631,240],[1636,230],[1641,227],[1646,231],[1651,244],[1656,267],[1662,304],[1668,350],[1673.7,400],[1681,457],[1689,515],[1697.6,573],[1707,630],[1716.4,670],[1729.6,714],[1740,743],[1754,773],[1772.8,800],[1791.5,817],[1815,831],[1838.5,839],[1866.7,845],[1894,849],[1907,847]];
d = `M${p[0]}`;
for (let i = 0; i < p.length - 1; i++) {
  const a = p[Math.max(i - 1, 0)], b = p[i], c = p[i + 1], e = p[Math.min(i + 2, p.length - 1)];
  d += `C${b[0] + (c[0] - a[0]) / 6} ${b[1] + (c[1] - a[1]) / 6} ${c[0] - (e[0] - b[0]) / 6} ${c[1] - (e[1] - b[1]) / 6} ${c}`;
}
s += `<path d="${d}" fill="none" stroke="#0f0" shape-rendering="crispEdges"/>`;

// Cursors and edge markers
line(1041.5, 112, 1041.5, 917, '#800080');
line(1907.5, 112, 1907.5, 917, '#00f'); line(1908.5, 119, 1908.5, 918, '#fff');
s += '<path d="M1034 111h15l-7.500 8z" fill="#800080"/><path d="M1900 111h15l-7.500 8z" fill="#00f"/>' +
  '<path d="M1912 119h10l-5-6zM1912 918h10l-5 6zM1916.500 513l3.500 5-3.500 5-3.500-5z" fill="#0f0"/><circle cx="12.500" cy="846" r="4" fill="#0f0" stroke="#9f9" stroke-width=".5"/>';

// Degree ruler
s += '<rect x="304" y="418.500" width="1337" height="25" fill="#ccffcc"/>';
line(304, 418.5, 1641, 418.5, '#808080'); line(304, 443.5, 1641, 443.5, '#808080');
for (let i = 0; i <= 80; i++) {
  const x = Math.round(304 + i * 16.7) + .5, L = i % 5 ? 4 : 6, c = i % 5 ? '#808080' : '#000';
  line(x, 419, x, 419 + L, c); line(x, 443 - (L - 1), x, 443, c);
}

// Measured points
[[304,163,0],[571,845,1],[631,806,1],[970,775,0],[1022,825,1],[1284,846,0],[1360,843,1]].forEach(([x, y, k]) =>
  s += `<circle cx="${x}" cy="${y}" r="4" fill="${k ? '#ff0' : '#fff'}" stroke="${k ? '#000' : '#fff'}" stroke-width="${k ? 1 : 0}"/>`);
plot.innerHTML = s;

// Text over the plot, placed by its share of the chart area
const put = (text, x, y, cls) => {
  const e = document.createElement('span');
  e.className = 'absolute whitespace-nowrap ' + cls;
  e.style.left = (x - V.x) / V.w * 100 + '%';
  e.style.top = (y - V.y) / V.h * 100 + '%';
  e.textContent = text;
  chart.append(e);
};
[['6.80',119],['5.10',301],['3.40',483],['1.70',664],['0',733],['0',846]].forEach(([t, y]) => put(t, 35, y, '-translate-x-full -translate-y-1/2 text-[10px] text-[#e0e0e0]'));
xs.forEach((x, i) => put((5.52602 + i * .015).toFixed(5), x, 927, '-translate-x-1/2 -translate-y-1/2 text-[10px] text-[#ccffcc]'));
for (let i = 0; i <= 16; i++) put(i * 45 + '°', i === 0 ? 312 : i === 16 ? 1626 : 307 + i * 83.5, 432, '-translate-x-1/2 -translate-y-1/2 text-[12px] text-black');
[['D',573],['E',642],['I',1009],['L',1380]].forEach(([t, x]) => put(t, x, 898, '-translate-x-1/2 -translate-y-1/2 text-[17px] font-bold text-white'));
[['(0°) 6.41 Bar',314,167],['(-4°) 0.37 Bar',547,786],['(-36°) 0.01 Bar',482,849],['0.66 Bar',911,755],['(27°) 0.20 Bar',1031,804],['-0.01 Bar',1222,850],['(29°) 0.03 Bar',1370,847]].forEach(([t, x, y]) =>
  put(t, x, y, 'bg-white pl-[3px] pr-1 text-[11px] leading-[16px] text-[#ff0000] outline outline-black'));
put('1', 1041.5, 115, '-translate-x-1/2 -translate-y-1/2 text-[7px] font-bold text-white');
put('2', 1907.5, 115, '-translate-x-1/2 -translate-y-1/2 text-[7px] font-bold text-white');

// Rotary knobs
const knob = (id, cx, cy, mid, labels, ang, turn) => {
  let g = `<defs><linearGradient id="${id}g" x1="0" y1="0" x2="1" y2="1"><stop offset=".15" stop-color="#f0f0f0"/><stop offset=".5" stop-color="#909090"/><stop offset=".85" stop-color="#000"/></linearGradient></defs>`;
  for (let a = 135; a <= 405; a += 15) {
    const r = a * Math.PI / 180;
    g += `<line x1="${cx + 19 * Math.cos(r)}" y1="${cy + 19 * Math.sin(r)}" x2="${cx + 23 * Math.cos(r)}" y2="${cy + 23 * Math.sin(r)}" stroke="${a % 90 === 45 ? '#000' : '#a0a0a0'}"/>`;
  }
  g += `<circle cx="${cx}" cy="${cy}" r="17" fill="#f0f0f0" stroke="url(#${id}g)" stroke-width="2"/>`;
  g += `<path d="M0 -3l3 5h-6z" fill="#00f" transform="translate(${cx + 14 * Math.cos(ang)} ${cy + 14 * Math.sin(ang)}) rotate(${turn})"/>`;
  g += `<text x="${cx}" y="${cy + 4}" text-anchor="middle" font-size="12">${mid}</text>`;
  labels.forEach(([t, x, y, c]) => g += `<text x="${x}" y="${y + 4}" text-anchor="middle" font-size="10" fill="${c || '#000'}">${t}</text>`);
  document.getElementById(id).innerHTML = g;
};
knob('gain', 878, 1014, '2В', [['1В',901,993],['5В',905,1032],['0.1В',847,1032]], -0.35, 180);
knob('rate', 982, 1014, '300K', [['250K',988,982],['100K',953,993],['333K',1010,993],['500K',1018,1005],['1K',955,1032],['1M',1009,1032,'#b0b0b0']], -1.25, 0);
</script>
</body>
</html>
